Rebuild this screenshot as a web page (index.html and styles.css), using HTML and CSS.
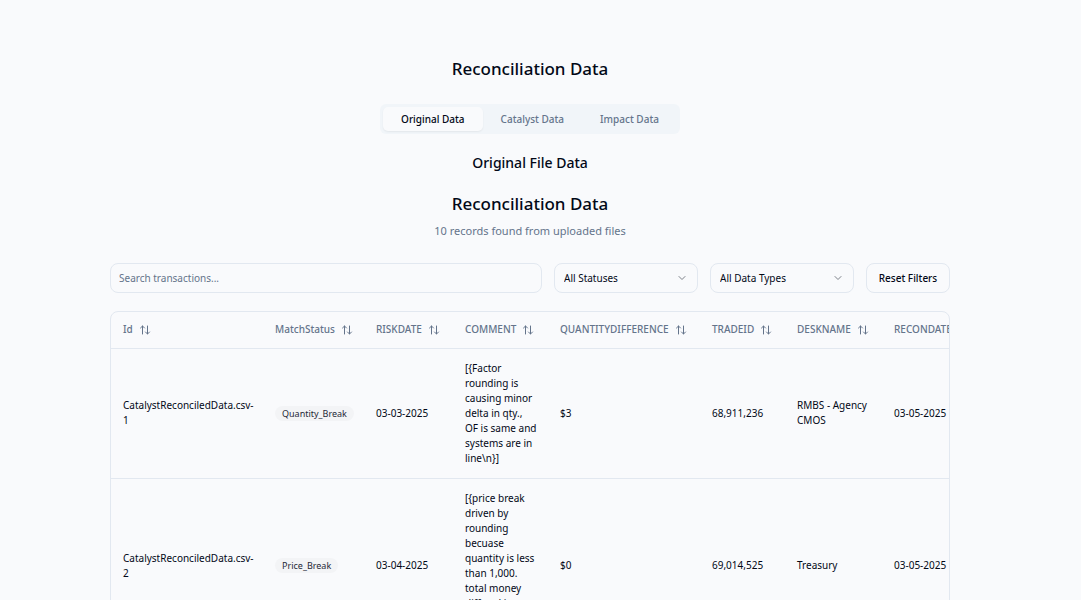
FILE: index.html
```html
<!DOCTYPE html>
<html lang="en">
<head>
<meta charset="utf-8">
<title>Reconciliation Data</title>
<link rel="stylesheet" href="styles.css">
</head>
<body>
<svg class="sprite" aria-hidden="true">
  <symbol id="sort" viewBox="0 0 24 24"><path d="m21 16-4 4-4-4M17 20V4M3 8l4-4 4 4M7 4v16"/></symbol>
  <symbol id="chevron" viewBox="0 0 24 24"><path d="m6 9 6 6 6-6"/></symbol>
</svg>
<main class="page">
  <h1 class="title">Reconciliation Data</h1>
  <div class="tabs" role="tablist">
    <button class="tab tab-active" role="tab" aria-selected="true">Original Data</button>
    <button class="tab" role="tab" aria-selected="false">Catalyst Data</button>
    <button class="tab" role="tab" aria-selected="false">Impact Data</button>
  </div>
  <h3 class="subtitle">Original File Data</h3>
  <h2 class="title">Reconciliation Data</h2>
  <p class="summary">10 records found from uploaded files</p>
  <div class="filters">
    <input class="control search" type="text" placeholder="Search transactions..." aria-label="Search transactions">
    <div class="picker">
      <select class="control select" aria-label="Status"><option>All Statuses</option></select>
      <svg class="chevron" aria-hidden="true"><use href="#chevron"/></svg>
    </div>
    <div class="picker">
      <select class="control select" aria-label="Data type"><option>All Data Types</option></select>
      <svg class="chevron" aria-hidden="true"><use href="#chevron"/></svg>
    </div>
    <button class="control reset">Reset Filters</button>
  </div>
  <div class="table-wrap">
    <table class="table">
      <colgroup>
        <col class="col-id"><col class="col-status"><col class="col-risk"><col class="col-comment"><col class="col-quantity"><col class="col-trade"><col class="col-desk"><col class="col-recon">
      </colgroup>
      <thead>
        <tr>
          <th><span class="head">Id<svg class="sort"><use href="#sort"/></svg></span></th>
          <th><span class="head">MatchStatus<svg class="sort"><use href="#sort"/></svg></span></th>
          <th><span class="head">RISKDATE<svg class="sort"><use href="#sort"/></svg></span></th>
          <th><span class="head">COMMENT<svg class="sort"><use href="#sort"/></svg></span></th>
          <th><span class="head">QUANTITYDIFFERENCE<svg class="sort"><use href="#sort"/></svg></span></th>
          <th><span class="head">TRADEID<svg class="sort"><use href="#sort"/></svg></span></th>
          <th><span class="head">DESKNAME<svg class="sort"><use href="#sort"/></svg></span></th>
          <th><span class="head">RECONDATE<svg class="sort"><use href="#sort"/></svg></span></th>
        </tr>
      </thead>
      <tbody>
        <tr>
          <td>CatalystReconciledData.csv-<br>1</td>
          <td><span class="badge">Quantity_Break</span></td>
          <td>03-03-2025</td>
          <td>[{Factor<br>rounding is<br>causing minor<br>delta in qty.,<br>OF is same and<br>systems are in<br>line\n}]</td>
          <td>$3</td>
          <td>68,911,236</td>
          <td>RMBS - Agency CMOS</td>
          <td>03-05-2025</td>
        </tr>
        <tr>
          <td>CatalystReconciledData.csv-<br>2</td>
          <td><span class="badge">Price_Break</span></td>
          <td>03-04-2025</td>
          <td>[{price break<br>driven by<br>rounding<br>becuase<br>quantity is less<br>than 1,000.<br>total money<br>diff and is<br>systems are in<br>line\n}]</td>
          <td>$0</td>
          <td>69,014,525</td>
          <td>Treasury</td>
          <td>03-05-2025</td>
        </tr>
      </tbody>
    </table>
  </div>
</main>
</body>
</html>
```
FILE: styles.css
```css
* { box-sizing: border-box; }
html { scrollbar-width: none; }
body {
  margin: 0;
  padding-right: 21px;
  background: #f9fafc;
  color: #020817;
  font: 10px/15px "Noto Sans", "Open Sans", sans-serif;
}
button, input, select { font: inherit; color: inherit; }
.sprite { display: none; }
.page {
  max-width: 840px;
  margin: 0 auto;
  padding: 54px 0 24px;
  display: flex;
  flex-direction: column;
  align-items: center;
}
.title, .subtitle, .summary { margin: 0; text-align: center; }
.title { font-size: 17px; line-height: 30px; font-weight: 500; }
.subtitle { margin: 18px 0 15px; font-size: 14px; line-height: 22px; font-weight: 500; }
.summary { margin-top: 3px; font-size: 11px; line-height: 18px; color: #64748b; }
.tabs {
  display: flex;
  margin-top: 20px;
  padding: 3px;
  border-radius: 6px;
  background: #f1f5f9;
}
.tab {
  height: 24px;
  padding: 0 18px;
  border: 0;
  border-radius: 5px;
  background: none;
  color: #64748b;
  font-size: 10px;
  font-weight: 500;
}
.tab-active { background: #f9fafc; color: #020817; box-shadow: 0 1px 2px rgb(0 0 0 / 6%); }
.filters { display: flex; gap: 12px; width: 100%; margin-top: 23px; }
.control {
  height: 30px;
  padding: 0 9px;
  border: 1px solid #e2e8f0;
  border-radius: 8px;
  background: #f9fafc;
}
.search { flex: 1; min-width: 0; padding-left: 8px; }
.search::placeholder { color: #64748b; opacity: 1; }
.picker { position: relative; width: 144px; }
.select { width: 100%; appearance: none; }
.chevron { position: absolute; right: 10px; top: 9px; opacity: .5; }
.sort, .chevron {
  width: 12px;
  height: 12px;
  flex: none;
  fill: none;
  stroke: currentColor;
  stroke-width: 2;
  stroke-linecap: round;
  stroke-linejoin: round;
}
.reset { width: 84px; font-weight: 500; white-space: nowrap; }
.table-wrap {
  width: 100%;
  margin-top: 18px;
  overflow-x: auto;
  border: 1px solid #e2e8f0;
  border-radius: 8px;
}
.table { width: 100%; table-layout: fixed; border-collapse: collapse; }
.col-id { width: 152px; }
.col-status { width: 101px; }
.col-risk { width: 89px; }
.col-comment { width: 95px; }
.col-quantity { width: 152px; }
.col-trade { width: 85px; }
.col-desk { width: 97px; }
.col-recon { width: 120px; }
th {
  height: 36px;
  padding: 0 0 0 12px;
  color: #64748b;
  font-weight: 500;
  text-align: left;
  white-space: nowrap;
}
td { padding: 12px 0 12px 12px; vertical-align: middle; }
tr { border-bottom: 1px solid #e2e8f0; }
.head { display: flex; align-items: center; gap: 6px; }
.badge {
  display: inline-block;
  padding: 0 7px;
  border-radius: 8px;
  background: #f3f4f6;
  color: #1f2937;
  font-size: 9px;
  line-height: 15px;
  font-weight: 400;
}
```
